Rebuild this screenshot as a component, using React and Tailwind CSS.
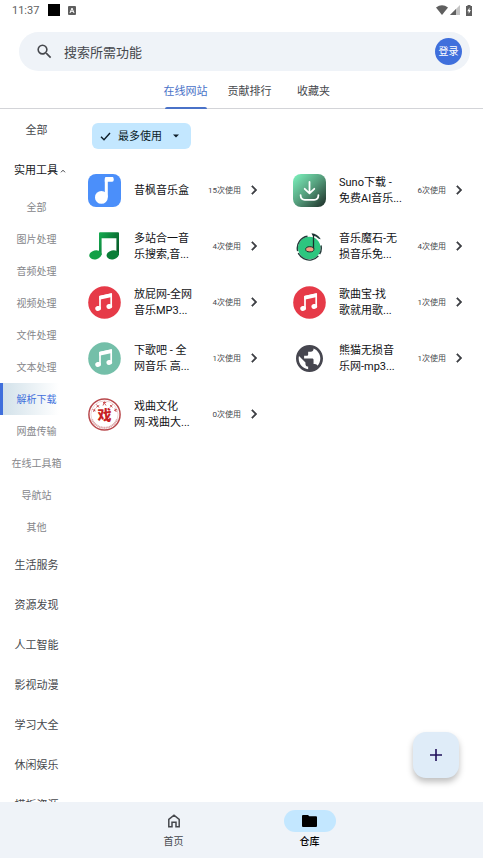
import React from "react";

function NoteBadge({ disc }) {
  return (
    <svg viewBox="0 0 33 33" className="size-full" aria-hidden="true">
      <circle cx="16.5" cy="16.5" r="16.3" fill={disc} />
      <path d="M12 22.2V10.6L23.2 8.2v12" fill="none" stroke="#fff" strokeWidth="1.7" strokeLinejoin="round" />
      <path d="M11.2 9.9l12.8-2.7v3.9l-12.8 2.7z" fill="#fff" />
      <ellipse cx="10.1" cy="22.4" rx="2.9" ry="2.4" fill="#fff" transform="rotate(-15 10.1 22.4)" />
      <ellipse cx="21.3" cy="20.4" rx="2.9" ry="2.4" fill="#fff" transform="rotate(-15 21.3 20.4)" />
    </svg>
  );
}

function BlueNote() {
  return (
    <svg viewBox="0 0 33 33" className="size-full" aria-hidden="true">
      <rect width="33" height="33" rx="8" fill="#4b8ffa" />
      <path d="M18.3 23V6.2q0-1.7 1.7-1.7h5" fill="none" stroke="#fff" strokeWidth="3" />
      <path d="M16.8 4.4q0-1.6 1.8-1.4h5.6q1.6 0 1.6 2.4t-1.6 2.4h-7.4z" fill="#fff" />
      <circle cx="13.4" cy="23.4" r="6.4" fill="#fff" />
    </svg>
  );
}

function GreenNote() {
  return (
    <svg viewBox="0 0 33 33" className="size-full" aria-hidden="true">
      <defs>
        <linearGradient id="leaf" x1="0" y1="0" x2="1" y2="0.6">
          <stop offset="0" stopColor="#16ad51" />
          <stop offset="1" stopColor="#07602b" />
        </linearGradient>
      </defs>
      <path d="M11 3.2q0-1 1-1h18q1 0 1 1V25h-2.600V8.200H13.600V25H11z" fill="url(#leaf)" />
      <ellipse cx="7.400" cy="24.800" rx="6.200" ry="4.500" fill="#13a047" transform="rotate(-14 7.400 24.800)" />
      <ellipse cx="24.800" cy="24.800" rx="6.300" ry="4.500" fill="#0b7e38" transform="rotate(-14 24.800 24.800)" />
    </svg>
  );
}

function DownloadTile() {
  return (
    <svg viewBox="0 0 33 33" className="size-full" aria-hidden="true">
      <defs>
        <linearGradient id="tile" x1="0" y1="0" x2="1" y2="1">
          <stop offset="0" stopColor="#7df5bf" />
          <stop offset="0.5" stopColor="#549c7b" />
          <stop offset="1" stopColor="#1c2b25" />
        </linearGradient>
      </defs>
      <rect width="33" height="33" rx="8" fill="url(#tile)" />
      <g fill="none" stroke="#fff" strokeWidth="1.8" strokeLinecap="round" strokeLinejoin="round">
        <path d="M16.500 8v11M11.700 14.800l4.800 4.600 4.800-4.600" />
        <path d="M7.600 21.200q.2 4.600 4.200 4.600h9.400q4 0 4.200-4.600" />
      </g>
    </svg>
  );
}

function VinylNote() {
  return (
    <svg viewBox="0 0 33 33" className="size-full" aria-hidden="true">
      <circle cx="16.300" cy="18" r="11.300" fill="#2dc67f" />
      <path d="M14.500 6.200A12 12 0 1 0 28 15.500" fill="none" stroke="#243b3a" strokeWidth="1.400" strokeDasharray="20 2 24 2 30" />
      <path d="M18.500 3.200q6 .5 9.300 6l-2-.4q-3-2.900-6.300-3.300z" fill="#243b3a" />
      <path d="M20.500 4v15" stroke="#192d2c" strokeWidth="1.300" />
      <ellipse cx="16.800" cy="19.300" rx="4.100" ry="2.600" fill="#f5a184" stroke="#192d2c" strokeWidth="1" />
    </svg>
  );
}

function Globe() {
  return (
    <svg viewBox="0 0 33 33" className="size-full" aria-hidden="true">
      <path
        transform="translate(.3 .3) scale(1.350)"
        fill="#46464f"
        d="M12 2C6.480 2 2 6.480 2 12s4.480 10 10 10 10-4.480 10-10S17.520 2 12 2zm-1 17.930c-3.950-.490-7-3.850-7-7.930 0-.620.080-1.210.210-1.790L9 15v1c0 1.100.900 2 2 2v1.930zm6.900-2.540c-.260-.810-1-1.390-1.900-1.390h-1v-3c0-.550-.450-1-1-1H8v-2h2c.550 0 1-.450 1-1V7h2c1.100 0 2-.900 2-2v-.410c2.930 1.190 5 4.060 5 7.410 0 2.080-.800 3.970-2.100 5.390z"
      />
    </svg>
  );
}

function Seal() {
  return (
    <svg viewBox="0 0 33 33" className="size-full" aria-hidden="true">
      <circle cx="16.500" cy="16.500" r="15.600" fill="#fff" stroke="#b8484c" strokeWidth="1.500" />
      <circle cx="16.500" cy="16.500" r="13.600" fill="none" stroke="#e6c0c1" strokeWidth="0.700" />
      <path d="M4 21.500a13.600 13.600 0 0 0 25 0" fill="none" stroke="#dba4a6" strokeWidth="2" strokeDasharray="1 0.700" />
      <g stroke="#c7474b" strokeWidth="0.900" fill="none">
        <path d="M4.500 11.500l3 1.500M5.500 14l1.600-3.500M8.500 6.500l2.500 3M8.300 9.300l3-2M15 4.500h3.200M16.500 3.500l-1.500 4M16.300 5l1.700 2.500M22 7l2.500 2.300M22 9.500l2.500-3M26 12.500l3-1M27 10.500l1.200 3.500" />
      </g>
      <text x="16.500" y="21.500" textAnchor="middle" fontSize="14" fontWeight="900" fill="#c81f25" fontFamily="'Noto Sans CJK SC', sans-serif">
        戏
      </text>
    </svg>
  );
}

const sites = [
  { name: "昔枫音乐盒", uses: 15, icon: <BlueNote /> },
  { name: "Suno下载 -\n免费AI音乐...", uses: 6, icon: <DownloadTile /> },
  { name: "多站合一音\n乐搜索,音...", uses: 4, icon: <GreenNote /> },
  { name: "音乐魔石-无\n损音乐免...", uses: 4, icon: <VinylNote /> },
  { name: "放屁网-全网\n音乐MP3...", uses: 4, icon: <NoteBadge disc="#e63a48" /> },
  { name: "歌曲宝-找\n歌就用歌...", uses: 1, icon: <NoteBadge disc="#e63a48" /> },
  { name: "下歌吧 - 全\n网音乐 高...", uses: 1, icon: <NoteBadge disc="#74bfa9" /> },
  { name: "熊猫无损音\n乐网-mp3...", uses: 1, icon: <Globe /> },
  { name: "戏曲文化\n网-戏曲大...", uses: 0, icon: <Seal /> },
];

const tools = ["全部", "图片处理", "音频处理", "视频处理", "文件处理", "文本处理", "解析下载", "网盘传输", "在线工具箱", "导航站", "其他"];
const groups = ["生活服务", "资源发现", "人工智能", "影视动漫", "学习大全", "休闲娱乐", "模板资源"];
const tabs = ["在线网站", "贡献排行", "收藏夹"];

function StatusBar() {
  return (
    <div className="flex h-5 shrink-0 items-center pl-3 pr-[11px] text-[#5f5f5f]">
      <span className="pt-0.5 text-[11px] leading-5">11:37</span>
      <span className="ml-[9px] size-3 bg-black" />
      <svg viewBox="0 0 8 9" className="ml-2 h-[9px] w-2" aria-hidden="true">
        <rect width="8" height="9" rx="1" fill="#5f5f5f" />
        <path d="M2 7l2-5 2 5M2.700 5.300h2.600" fill="none" stroke="#fff" strokeWidth="1" />
      </svg>
      <svg viewBox="0 0 12 10" className="ml-auto h-2.5 w-3" aria-hidden="true">
        <path d="M0 2.500Q6-2 12 2.500L6 10z" fill="#5f5f5f" />
      </svg>
      <svg viewBox="0 0 10 10" className="ml-0.5 size-2.5" aria-hidden="true">
        <path d="M10 0v10H0z" fill="#c4c4c4" />
        <path d="M6 4v6H0z" fill="#5f5f5f" />
      </svg>
      <svg viewBox="0 0 6 11" className="ml-1.5 h-[11px] w-1.5" aria-hidden="true">
        <path d="M1.500 1V0h3v1H6v10H0V1z" fill="#5f5f5f" />
        <path d="M3.500 2.500L1.300 6.200h1.400v2.600l2.200-3.700H3.500z" fill="#fff" />
      </svg>
    </div>
  );
}

function SearchBar() {
  return (
    <div className="ml-[19px] mr-[13px] mt-3 flex h-[39px] shrink-0 items-center rounded-full bg-[#eff3f8] pl-4 pr-2">
      <svg viewBox="0 0 24 24" className="size-[19px] shrink-0" fill="#46484d" aria-hidden="true">
        <path d="M15.500 14h-.790l-.280-.270A6.471 6.471 0 0 0 16 9.500 6.500 6.500 0 1 0 9.500 16c1.610 0 3.090-.590 4.230-1.570l.270.280v.790l5 4.990L20.490 19l-4.990-5zm-6 0C7.010 14 5 11.990 5 9.500S7.010 5 9.500 5 14 7.010 14 9.500 11.990 14 9.500 14z" />
      </svg>
      <input
        type="text"
        aria-label="搜索所需功能"
        placeholder="搜索所需功能"
        className="ml-2.5 min-w-0 flex-1 bg-transparent pt-0.5 text-[13px] leading-5 outline-none placeholder:text-[#46484d]"
      />
      <button type="button" className="size-[27px] shrink-0 rounded-full bg-[#3f6fdc] text-[10px] leading-none text-white">
        登录
      </button>
    </div>
  );
}

function Tabs() {
  return (
    <nav className="flex h-[38px] shrink-0 justify-center border-b border-[#d3d4d8] pl-4">
      {tabs.map((tab, i) => (
        <button key={tab} type="button" className={`relative h-full w-16 pt-1 text-[11px] leading-4 ${i === 0 ? "text-[#4a72c8]" : "text-[#46484d]"}`}>
          {tab}
          {i === 0 && <span className="absolute inset-x-[11px] -bottom-px h-0.5 rounded-t-sm bg-[#4a72c8]" />}
        </button>
      ))}
    </nav>
  );
}

function Sidebar() {
  return (
    <aside className="flex w-[73px] shrink-0 flex-col overflow-hidden pt-0.5 text-[11px] leading-4 text-[#46484d]">
      <button type="button" className="h-10 shrink-0">全部</button>
      <button type="button" className="flex h-10 shrink-0 items-center pl-3.5 text-[#16181c]">
        实用工具
        <svg viewBox="0 0 6 4" className="ml-0.5 h-1 w-1.5" fill="none" stroke="#46484d" aria-hidden="true">
          <path d="M1 3.300L3 1.200l2 2.100" />
        </svg>
      </button>
      <div className="flex shrink-0 flex-col pb-[3px] text-[10px] text-[#85868a]">
        {tools.map((tool) => (
          <button
            key={tool}
            type="button"
            className={
              tool === "解析下载"
                ? "h-8 border-l-[3px] border-[#3f6fdc] bg-linear-to-r from-[#d3e2ea] to-white to-80% pr-[3px] pt-0.5 text-[#3f6fdc]"
                : "h-8 pt-0.5"
            }
          >
            {tool}
          </button>
        ))}
      </div>
      {groups.map((group) => (
        <button key={group} type="button" className="h-10 shrink-0">
          {group}
        </button>
      ))}
    </aside>
  );
}

function Site({ name, uses, icon }) {
  return (
    <li>
      <a href="#" className="flex h-14 items-center pl-[15px] pr-[15px]">
        <span className="size-[33px] shrink-0">{icon}</span>
        <span className="ml-[13px] flex-1 whitespace-pre pt-0.5 text-[11px] leading-4 text-[#111215]">{name}</span>
        <span className="shrink-0 whitespace-nowrap pt-0.5 text-[8px] leading-4 text-[#46484d]">{uses}次使用</span>
        <svg viewBox="0 0 24 24" className="ml-1 size-[18px] shrink-0" fill="#3c3e43" stroke="#3c3e43" strokeWidth="0.600" aria-hidden="true">
          <path d="M10 6L8.590 7.410 13.170 12l-4.580 4.590L10 18l6-6z" />
        </svg>
      </a>
    </li>
  );
}

function BottomNav() {
  return (
    <nav className="flex h-14 shrink-0 justify-center bg-[#eff3f8] text-[10px] leading-4">
      <button type="button" className="flex w-[136px] flex-col items-center pt-2 text-[#46484d]">
        <span className="flex h-[22px] w-[52px] items-center justify-center">
          <svg viewBox="0 0 14 14" className="size-3.5" fill="none" stroke="#46484d" strokeWidth="1.500" aria-hidden="true">
            <path d="M1.800 5.400L7 1.200l5.200 4.200v7.400H9V8.300H5v4.500H1.800z" />
          </svg>
        </span>
        <span className="mt-0.5">首页</span>
      </button>
      <button type="button" className="flex w-[136px] flex-col items-center pt-2 text-black">
        <span className="flex h-[22px] w-[52px] items-center justify-center rounded-full bg-[#c3e7ff]">
          <svg viewBox="0 0 15 12" className="h-3 w-[15px]" fill="#000" aria-hidden="true">
            <path d="M0 1q0-1 1-1h5l1.300 1.200H14q1 0 1 1V11q0 1-1 1H1q-1 0-1-1z" />
          </svg>
        </span>
        <span className="mt-0.5 font-medium">仓库</span>
      </button>
    </nav>
  );
}

export default function App() {
  return (
    <div className="flex h-screen flex-col bg-white font-[Roboto,'Noto_Sans_CJK_SC',sans-serif]">
      <StatusBar />
      <SearchBar />
      <Tabs />
      <div className="relative flex min-h-0 flex-1">
        <Sidebar />
        <main className="min-w-0 flex-1 overflow-hidden pt-3.5">
          <button type="button" className="ml-[19px] flex h-[26px] items-center rounded-md bg-[#c3e7ff] pl-2 pr-3 text-[11px] leading-4 text-[#0d1d29]">
            <svg viewBox="0 0 11 9" className="h-[9px] w-[11px]" fill="none" stroke="#0d1d29" strokeWidth="1.400" aria-hidden="true">
              <path d="M1 4.800l3 3L10 1" />
            </svg>
            <span className="ml-[7px] pt-0.5">最多使用</span>
            <svg viewBox="0 0 6 4" className="ml-[11px] h-1 w-1.5" fill="#0d1d29" aria-hidden="true">
              <path d="M0 .500h6l-3 3z" />
            </svg>
          </button>
          <ul className="mt-[13px] grid grid-cols-2">
            {sites.map((site) => (
              <Site key={site.name} {...site} />
            ))}
          </ul>
        </main>
        <button
          type="button"
          aria-label="添加"
          className="absolute bottom-6 right-6 flex size-[46px] items-center justify-center rounded-[13px] bg-[#dfecf8] shadow-[0_4px_6px_rgba(0,0,0,0.25)]"
        >
          <svg viewBox="0 0 12 12" className="size-3" stroke="#21105a" strokeWidth="1.600" aria-hidden="true">
            <path d="M6 0v12M0 6h12" />
          </svg>
        </button>
      </div>
      <BottomNav />
    </div>
  );
}
